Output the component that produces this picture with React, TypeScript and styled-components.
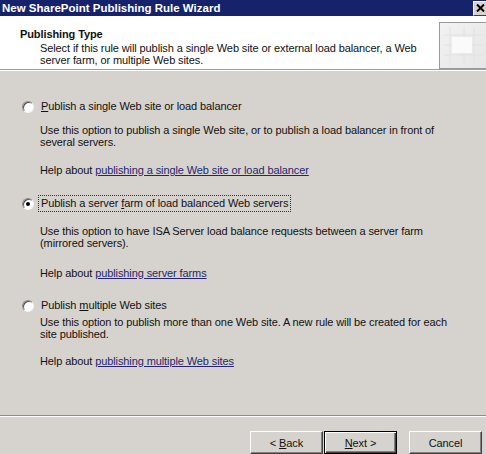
import React from "react";
import styled, { createGlobalStyle } from "styled-components";

const Global = createGlobalStyle`
  html, body { margin: 0; padding: 0; background: #d6d3ce; }
  body { font-family: Tahoma, "Liberation Sans", "DejaVu Sans", sans-serif; font-size: 11px; letter-spacing: -0.1px; color: #111; }
`;

const Window = styled.div`
  width: 486px;
  height: 454px;
  display: flex;
  flex-direction: column;
  background: #d6d3ce;
  overflow: hidden;
`;

const TitleBar = styled.div`
  height: 16px;
  background: #16236b;
  display: flex;
  align-items: center;
  justify-content: space-between;
  padding-left: 2px;
  color: #fff;
  font-weight: bold;
  font-size: 11.5px;
  letter-spacing: 0;
`;

const CloseBtn = styled.div`
  width: 12px;
  height: 13px;
  background: #d6d3ce;
  border-top: 1px solid #fff;
  border-left: 1px solid #fff;
  border-bottom: 1px solid #404040;
  display: flex;
  align-items: center;
  justify-content: center;
`;

const Header = styled.div`
  height: 47px;
  background: #fff;
  border-bottom: 1px solid #a09d98;
  box-shadow: 0 1px 0 #fff;
  display: flex;
  justify-content: space-between;
  padding: 6px 0 0 20px;
  box-sizing: content-box;
`;

const HeaderText = styled.div`
  display: flex;
  flex-direction: column;
  padding-top: 6px;
`;

const HeaderTitle = styled.div`
  font-weight: bold;
  line-height: 13px;
`;

const HeaderDesc = styled.div`
  padding-left: 20px;
  line-height: 12px;
  margin-top: 1px;
  white-space: nowrap;
`;

const IconBox = styled.div`
  width: 46px;
  height: 45px;
  border: 1px solid #9a9a9a;
  margin-right: -1px;
  background: linear-gradient(135deg, #f2f2f2, #e6e6e6);
`;

const Content = styled.div`
  flex: 1;
  padding: 28px 0 0 22px;
  display: flex;
  flex-direction: column;
`;

const RadioRow = styled.div<{ $mt?: number }>`
  display: flex;
  align-items: center;
  height: 17px;
  margin-top: ${(p) => p.$mt ?? 0}px;
`;

const Radio = styled.span<{ $checked?: boolean }>`
  width: 12px;
  height: 12px;
  border-radius: 50%;
  box-sizing: border-box;
  background: #fff;
  border: 1px solid #8a8a8a;
  border-right-color: #f4f4f4;
  border-bottom-color: #f4f4f4;
  box-shadow: inset 1px 1px 0 #505050;
  display: flex;
  align-items: center;
  justify-content: center;
  margin-right: 4px;
  &::after {
    content: "";
    width: 4px;
    height: 4px;
    border-radius: 50%;
    background: ${(p) => (p.$checked ? "#000" : "transparent")};
  }
`;

const Label = styled.span<{ $focus?: boolean }>`
  padding: 1px 2px;
  border: 1px dotted ${(p) => (p.$focus ? "#333" : "transparent")};
  line-height: 13px;
`;

const Desc = styled.div<{ $mt: number }>`
  margin: ${(p) => p.$mt}px 0 0 18px;
  line-height: 12px;
  white-space: nowrap;
`;

const Link = styled.a`
  color: #25256f;
  text-decoration: underline;
`;

const Footer = styled.div`
  border-top: 1px solid #8f8c87;
  box-shadow: inset 0 1px 0 #fff;
  height: 39px;
  display: flex;
  justify-content: flex-end;
  align-items: flex-start;
  padding: 15px 4px 0 0;
  box-sizing: border-box;
`;

const Button = styled.button<{ $default?: boolean; $ml?: number }>`
  width: 73px;
  height: 23px;
  margin-left: ${(p) => p.$ml ?? 0}px;
  font-family: inherit;
  font-size: 11px;
  letter-spacing: -0.1px;
  color: #111;
  background: #d6d3ce;
  border: 1px solid ${(p) => (p.$default ? "#000" : "#fff")};
  border-right-color: ${(p) => (p.$default ? "#000" : "#404040")};
  border-bottom-color: ${(p) => (p.$default ? "#000" : "#404040")};
  box-shadow: ${(p) =>
    p.$default
      ? "inset 1px 1px 0 #fff, inset -1px -1px 0 #404040, inset -2px -2px 0 #808080"
      : "inset -1px -1px 0 #808080"};
  padding: 0;
`;

const U = styled.span`
  text-decoration: underline;
`;

const Row: React.FC<{
  mt?: number;
  checked?: boolean;
  focus?: boolean;
  children: React.ReactNode;
}> = ({ mt, checked, focus, children }) => (
  <RadioRow $mt={mt}>
    <Radio $checked={checked} />
    <Label $focus={focus}>{children}</Label>
  </RadioRow>
);

export default function App() {
  return (
    <Window>
      <Global />
      <TitleBar>
        <span>New SharePoint Publishing Rule Wizard</span>
        <CloseBtn>
          <svg width="9" height="8" viewBox="0 0 9 8">
            <path d="M1 0.5 L8 7.5 M8 0.5 L1 7.5" stroke="#000" strokeWidth="2" />
          </svg>
        </CloseBtn>
      </TitleBar>
      <Header>
        <HeaderText>
          <HeaderTitle>Publishing Type</HeaderTitle>
          <HeaderDesc>
            Select if this rule will publish a single Web site or external load balancer, a Web
            <br />
            server farm, or multiple Web sites.
          </HeaderDesc>
        </HeaderText>
        <IconBox>
          <svg width="46" height="45" viewBox="0 0 46 45">
            <g stroke="#e2e2e2" strokeWidth="1">
              <path d="M10 4 V40 M24 4 V40 M34 4 V40 M4 12 H42 M4 22 H42 M4 32 H42" />
            </g>
            <rect x="12" y="14" width="20" height="16" fill="#fafafa" />
          </svg>
        </IconBox>
      </Header>
      <Content>
        <Row>
          <U>P</U>ublish a single Web site or load balancer
        </Row>
        <Desc $mt={9}>
          Use this option to publish a single Web site, or to publish a load balancer in front of
          <br />
          several servers.
        </Desc>
        <Desc $mt={16}>
          Help about <Link>publishing a single Web site or load balancer</Link>
        </Desc>
        <Row mt={19} checked focus>
          Publish a server <U>f</U>arm of load balanced Web servers
        </Row>
        <Desc $mt={13}>
          Use this option to have ISA Server load balance requests between a server farm
          <br />
          (mirrored servers).
        </Desc>
        <Desc $mt={18}>
          Help about <Link>publishing server farms</Link>
        </Desc>
        <Row mt={18}>
          Publish <U>m</U>ultiple Web sites
        </Row>
        <Desc $mt={2}>
          Use this option to publish more than one Web site. A new rule will be created for each
          <br />
          site published.
        </Desc>
        <Desc $mt={15}>
          Help about <Link>publishing multiple Web sites</Link>
        </Desc>
      </Content>
      <Footer>
        <Button>
          &lt; <U>B</U>ack
        </Button>
        <Button $default $ml={1}>
          <U>N</U>ext &gt;
        </Button>
        <Button $ml={12}>Cancel</Button>
      </Footer>
    </Window>
  );
}
